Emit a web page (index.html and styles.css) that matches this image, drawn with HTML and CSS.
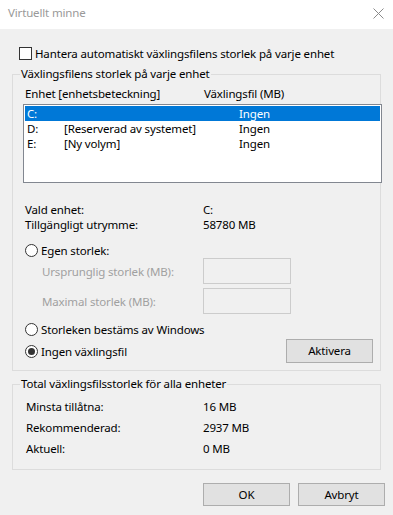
FILE: index.html
```html
<!DOCTYPE html>
<html lang="sv">
<head>
<meta charset="utf-8">
<title>Virtuellt minne</title>
<link rel="stylesheet" href="styles.css">
</head>
<body>
<div class="window">
  <div class="titlebar">
    <span class="title">Virtuellt minne</span>
    <svg class="close" width="11" height="11" viewBox="0 0 11 11"><path d="M0.5 0.5 L10.5 10.5 M10.5 0.5 L0.5 10.5" stroke="#8a8a8a" stroke-width="1" fill="none"/></svg>
  </div>
  <div class="content">
    <div class="check-row"><span class="checkbox"></span><span>Hantera automatiskt växlingsfilens storlek på varje enhet</span></div>

    <fieldset class="group group-drives">
      <legend>Växlingsfilens storlek på varje enhet</legend>
      <div class="list-head"><span>Enhet [enhetsbeteckning]</span><span>Växlingsfil (MB)</span></div>
      <div class="listbox">
        <div class="list-row selected"><span>C:</span><span></span><span>Ingen</span></div>
        <div class="list-row"><span>D:</span><span>[Reserverad av systemet]</span><span>Ingen</span></div>
        <div class="list-row"><span>E:</span><span>[Ny volym]</span><span>Ingen</span></div>
      </div>
      <div class="info-grid">
        <span>Vald enhet:</span><span>C:</span>
        <span>Tillgängligt utrymme:</span><span>58780 MB</span>
      </div>
      <div class="radio-row first"><span class="radio"></span><span>Egen storlek:</span></div>
      <div class="size-row"><span class="disabled">Ursprunglig storlek (MB):</span><span class="edit"></span></div>
      <div class="size-row second"><span class="disabled">Maximal storlek (MB):</span><span class="edit"></span></div>
      <div class="radio-row windows"><span class="radio"></span><span>Storleken bestäms av Windows</span></div>
      <div class="radio-row none-row"><span class="radio checked"></span><span>Ingen växlingsfil</span><button class="btn set-btn">Aktivera</button></div>
    </fieldset>

    <fieldset class="group group-total">
      <legend>Total växlingsfilsstorlek för alla enheter</legend>
      <div class="total-grid">
        <span>Minsta tillåtna:</span><span>16 MB</span>
        <span>Rekommenderad:</span><span>2937 MB</span>
        <span>Aktuell:</span><span>0 MB</span>
      </div>
    </fieldset>

    <div class="buttons">
      <button class="btn">OK</button>
      <button class="btn">Avbryt</button>
    </div>
  </div>
</div>
</body>
</html>
```

FILE: styles.css
```css
* { box-sizing: border-box; }
html, body { margin: 0; padding: 0; }
body {
  width: 393px;
  height: 515px;
  background: #f0f0f0;
  font-family: "Noto Sans", "Open Sans", sans-serif;
  font-size: 11.5px;
  letter-spacing: -0.15px;
  color: #000;
  overflow: hidden;
}
.window { width: 393px; height: 515px; }
.titlebar {
  height: 29px;
  background: #fff;
  display: flex;
  align-items: center;
  justify-content: space-between;
  padding: 0 9px 3px 8px;
}
.title { color: #999; line-height: 16px; }
.close { display: block; }

.content { padding: 0 0 0 12px; }

.check-row {
  margin-top: 18px;
  padding-left: 7px;
  height: 13px;
  display: flex;
  align-items: center;
  line-height: 15px;
}
.checkbox {
  width: 13px; height: 13px;
  border: 1px solid #333;
  background: #fff;
  margin-right: 3px;
  flex: none;
}

.group {
  margin: 6px 0 0 0;
  padding: 0;
  width: 369px;
  border: 1px solid #dcdcdc;
  min-width: 0;
}
.group legend {
  margin-left: 7px;
  padding: 0 1px;
  line-height: 16px;
}

.list-head {
  padding: 4px 0 0 12px;
  display: grid;
  grid-template-columns: 179px auto;
  line-height: 15px;
}
.listbox {
  margin: 3px 0 0 10px;
  width: 359px;
  height: 79px;
  border: 1px solid #828790;
  background: #fff;
  padding: 1px;
}
.list-row {
  display: grid;
  grid-template-columns: 37px 175px auto;
  height: 15px;
  line-height: 15px;
  padding-left: 2px;
  white-space: nowrap;
}
.list-row.selected { background: #0078d7; color: #fff; }

.info-grid {
  margin-top: 19px;
  padding-left: 12px;
  display: grid;
  grid-template-columns: 178px auto;
  line-height: 15px;
}

.radio-row {
  display: flex;
  align-items: center;
  padding-left: 12px;
  height: 15px;
  line-height: 15px;
}
.radio-row.first { margin-top: 11px; }
.radio-row.windows { margin-top: 8px; }
.radio-row.none-row { margin-top: 2px; height: 24px; padding-right: 7px; }
.radio {
  width: 13px; height: 13px;
  border: 1px solid #333;
  border-radius: 50%;
  background: #fff;
  margin-right: 3px;
  flex: none;
  display: flex;
  align-items: center;
  justify-content: center;
}
.radio.checked::after {
  content: "";
  width: 7px; height: 7px;
  border-radius: 50%;
  background: #333;
}

.size-row {
  display: grid;
  grid-template-columns: 161px 88px;
  align-items: center;
  padding-left: 29px;
  height: 26px;
}
.size-row.second { margin-top: 4px; }
.disabled { color: #a0a0a0; }
.edit {
  height: 26px;
  border: 1px solid #cccccc;
  background: #f0f0f0;
}

.btn {
  font-family: inherit;
  font-size: 11.5px;
  letter-spacing: -0.15px;
  color: #000;
  background: #e1e1e1;
  border: 1px solid #adadad;
  padding: 0;
  margin: 0;
  height: 24px;
  width: 87px;
  line-height: 16px;
}
.set-btn { margin-left: auto; }

.group-total { margin-top: 5px; padding-bottom: 10px; }
.group-drives { padding-bottom: 7px; }
.total-grid {
  padding: 4px 0 0 13px;
  display: grid;
  grid-template-columns: 177px auto;
  line-height: 21px;
}

.buttons {
  margin-top: 13px;
  display: flex;
  justify-content: flex-end;
  gap: 8px;
  padding-right: 8px;
}
.buttons .btn { height: 23px; }
```
